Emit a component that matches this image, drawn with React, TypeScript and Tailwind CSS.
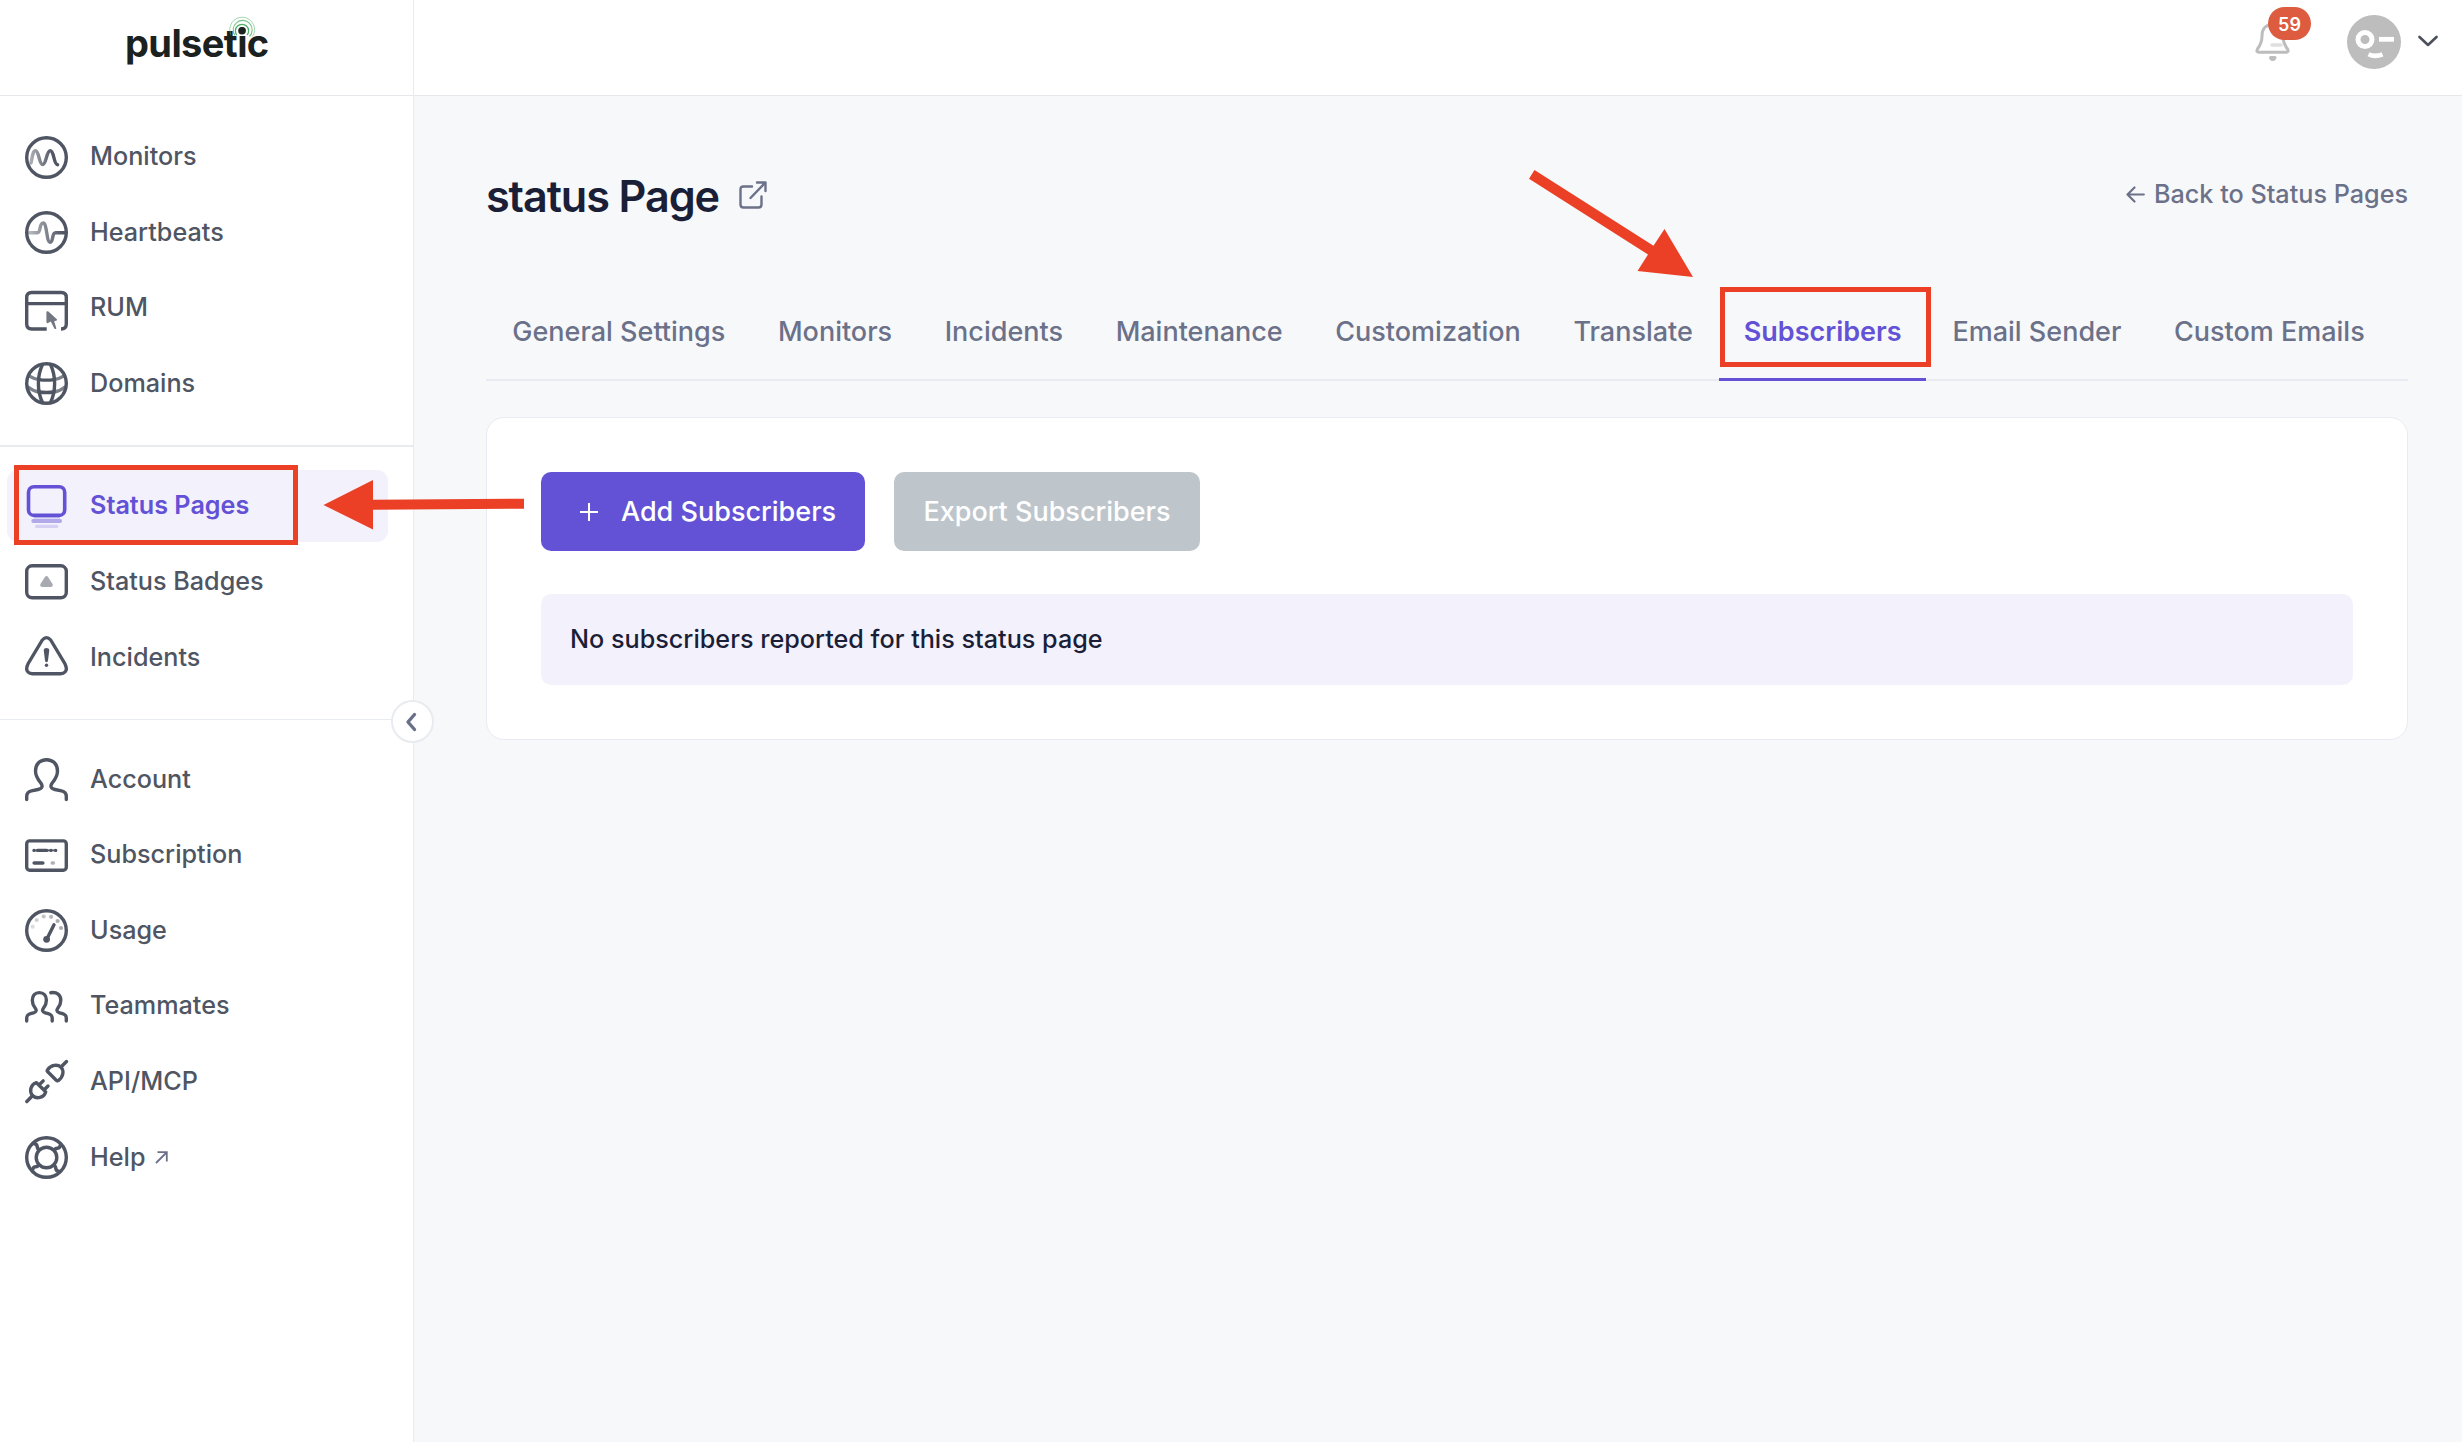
import type { ReactNode } from "react";
import clsx from "clsx";

type IconProps = {
  children: ReactNode;
};

type NavItem = {
  label: string;
  icon: ReactNode;
  active?: boolean;
  external?: boolean;
};

const NavIcon = ({ children }: IconProps) => (
  <svg
    viewBox="0 0 43 43"
    className="relative top-px w-[43px] h-[43px] shrink-0 overflow-visible"
    fill="none"
    stroke="currentColor"
    strokeWidth="3.4"
    strokeLinecap="round"
    strokeLinejoin="round"
  >
    {children}
  </svg>
);

const MonitorsIcon = () => (
  <NavIcon>
    <defs>
      <linearGradient id="wave" x1="4" y1="0" x2="28" y2="0" gradientUnits="userSpaceOnUse">
        <stop offset="0" stopColor="#4f5562" stopOpacity="0.45" />
        <stop offset="1" stopColor="#4f5562" />
      </linearGradient>
    </defs>
    <circle cx="21.5" cy="21.5" r="19.8" />
    <path
      stroke="url(#wave)"
      d="M6 27C7.5 19 8 14.7 10.5 14.7C14 14.7 14 28.5 17.6 28.5C21.4 28.5 21.3 14.7 25.3 14.7C29.2 14.7 28.6 28.5 32.6 28.7"
    />
  </NavIcon>
);

const HeartbeatsIcon = () => (
  <NavIcon>
    <defs>
      <linearGradient id="beat" x1="3" y1="0" x2="38" y2="0" gradientUnits="userSpaceOnUse">
        <stop offset="0" stopColor="#4f5562" stopOpacity="0.4" />
        <stop offset="1" stopColor="#4f5562" />
      </linearGradient>
    </defs>
    <circle cx="21.5" cy="21.5" r="19.8" />
    <path
      stroke="url(#beat)"
      d="M4.5 21.7H12.5C16 21.7 14 12 18.1 12S21.3 31.2 25 31.2S26.5 21.7 30.5 21.7H40"
    />
  </NavIcon>
);

const RumIcon = () => (
  <NavIcon>
    <path strokeLinecap="butt" d="M21.7 42H6.7Q1.7 42 1.7 37V10.5Q1.7 5.5 6.7 5.5H36.3Q41.3 5.5 41.3 10.5V37Q41.3 42 36 42" />
    <path d="M1.7 16.6H41.3" />
    <path
      fill="currentColor"
      stroke="none"
      d="M21.4 25.4V34.8Q21.4 36.6 23 36L25.8 34.6L29.2 41.2Q30.2 42.8 31.4 41.6L29.2 34.2L31.6 33.6Q32.8 33 31.6 32L23.4 24.6Q21.4 23.4 21.4 25.4Z"
      opacity="0.8"
    />
  </NavIcon>
);

const DomainsIcon = () => (
  <NavIcon>
    <circle cx="21.5" cy="21.5" r="19.8" />
    <path d="M17.5 2.5C12 14 12 29 17.5 40.5M25.5 2.5C31 14 31 29 25.5 40.5" />
    <path d="M14 17.6Q21.5 18.7 29 17.6M14 30Q21.5 31 29 30" />
    <path opacity="0.75" d="M5 14.4Q9 17 14 17.6M38 14.4Q34 17 29 17.6M3 25Q8 29.2 14 30M40 25Q35 29.2 29 30" />
  </NavIcon>
);

const StatusPagesIcon = () => (
  <NavIcon>
    <rect x="3.5" y="1.7" width="36.2" height="28.7" rx="5.5" strokeWidth="3.6" />
    <path opacity="0.3" strokeWidth="1.2" d="M9 32.8H34.5" />
    <path opacity="0.45" strokeWidth="3.8" d="M8.2 36H35.2" />
    <path opacity="0.2" strokeWidth="3.2" d="M11.6 41.4H31.7" />
  </NavIcon>
);

const StatusBadgesIcon = () => (
  <NavIcon>
    <rect x="1.7" y="4.8" width="39.6" height="32" rx="5.5" />
    <path
      stroke="none"
      fill="#a7aab1"
      d="M19.6 16.4Q21.5 13.6 23.4 16.4L27.4 22.8Q28.8 25.7 25.8 25.9H17.2Q14.2 25.7 15.6 22.8Z"
    />
  </NavIcon>
);

const IncidentsIcon = () => (
  <NavIcon>
    <path d="M17.3 4Q21.5 -0.8 25.7 4L39.8 27.5Q42.8 33.5 40 36Q38.5 37.7 35.5 37.7H7.5Q4.5 37.7 3 36Q0.2 33.5 3.2 27.5Z" />
    <path stroke="none" fill="currentColor" d="M18.7 14Q18.9 12 21.5 12T24.3 14L23 24.5Q22.8 26.3 21.5 26.3T20 24.5Z" />
    <circle cx="21.5" cy="29.2" r="1.7" fill="currentColor" stroke="none" />
  </NavIcon>
);

const AccountIcon = () => (
  <NavIcon>
    <path d="M1.7 41.5V38.5C1.7 34.5 3.5 33.4 6.5 32.8L13 31.5C17.5 30.5 18 28 15.8 25C12.5 21 10.5 18 10.5 13C10.5 6 15 1.7 21.5 1.7S32.5 6 32.5 13C32.5 18 30.5 21 27.2 25C25 28 25.5 30.5 30 31.5L36.5 32.8C39.5 33.4 41.3 34.5 41.3 38.5V41.5" />
  </NavIcon>
);

const SubscriptionIcon = () => (
  <NavIcon>
    <rect x="1.7" y="6.9" width="39.6" height="29.4" rx="3" />
    <path d="M9 16.4H9.1M12.6 16.4H21.8M25.9 16.4H26M30.6 16.4H30.7" />
    <path strokeWidth="1.6" d="M9 16.4H30.7" />
    <path strokeWidth="3.6" d="M9.2 29H17.8" />
    <path opacity="0.45" d="M27.2 29H28.4" />
  </NavIcon>
);

const UsageIcon = () => (
  <NavIcon>
    <circle cx="21.5" cy="21.5" r="19.8" />
    <path d="M29 15.8L21.9 30" />
    <circle cx="21.6" cy="30.3" r="3.4" fill="currentColor" stroke="none" />
    <g fill="currentColor" stroke="none">
      <circle cx="7.7" cy="17.7" r="2.1" opacity="0.2" />
      <circle cx="11.7" cy="11" r="2.1" opacity="0.28" />
      <circle cx="18.7" cy="7.5" r="2.1" opacity="0.35" />
      <circle cx="26.1" cy="7.8" r="2.1" opacity="0.42" />
      <circle cx="32.6" cy="12" r="2.1" opacity="0.48" />
      <circle cx="36" cy="19" r="2.1" opacity="0.48" />
    </g>
  </NavIcon>
);

const TeammatesIcon = () => (
  <NavIcon>
    <path d="M1.7 36V33.5C1.7 30 3.2 29.4 5.5 28.7L8.5 27.8C11.8 26.8 11.8 25 10 22.7C8.2 20.4 7.3 18.5 7.3 15.2C7.3 10.5 10 7.6 14.3 7.6S21.4 10.5 21.4 15.2C21.4 18.5 20.4 20.4 18.7 22.7C17 25 16.9 26.8 20.2 27.8L23.2 28.7C25.5 29.4 27.2 30 27.2 33.5V36" />
    <path d="M25.8 7.7C32 6.8 35.8 9.7 35.8 15.2C35.8 18.5 34.8 20.4 33.1 22.7C31.4 25 31.3 26.8 34.6 27.8L37.5 28.7C39.8 29.4 41.3 30 41.3 33.5V36" />
  </NavIcon>
);

const ApiIcon = () => (
  <NavIcon>
    <path d="M41.5 1.5L36 7" />
    <path d="M22.6 9.7C26 4.8 32.5 4 36 7.2C39.3 10.7 38.3 17 33.6 20.3Q32.3 21.2 31 20L23 12Q21.7 10.9 22.6 9.7Z" />
    <path d="M1.8 41.5L7.5 35.7" />
    <path d="M11.5 22.7C5.5 24.5 4 31.5 7.5 35.5C11.5 39.5 19 38 20.7 31.8ZM14.5 24.5L18.2 20.9M19.5 29.5L23 26" />
  </NavIcon>
);

const HelpIcon = () => (
  <NavIcon>
    <circle cx="21.5" cy="21.5" r="19.8" />
    <circle cx="21.5" cy="21.5" r="10.3" />
    <path d="M8.5 7.5Q12 7.8 12.2 10.5T14.4 13.6M35.5 8.5Q35.2 12 32.5 12.2T29.4 14.4M34.5 35.5Q31 35.2 30.8 32.5T28.6 29.4M7.5 34.5Q7.8 31 10.5 30.8T13.6 28.6" />
  </NavIcon>
);

const groups: NavItem[][] = [
  [
    { label: "Monitors", icon: <MonitorsIcon /> },
    { label: "Heartbeats", icon: <HeartbeatsIcon /> },
    { label: "RUM", icon: <RumIcon /> },
    { label: "Domains", icon: <DomainsIcon /> },
  ],
  [
    { label: "Status Pages", icon: <StatusPagesIcon />, active: true },
    { label: "Status Badges", icon: <StatusBadgesIcon /> },
    { label: "Incidents", icon: <IncidentsIcon /> },
  ],
  [
    { label: "Account", icon: <AccountIcon /> },
    { label: "Subscription", icon: <SubscriptionIcon /> },
    { label: "Usage", icon: <UsageIcon /> },
    { label: "Teammates", icon: <TeammatesIcon /> },
    { label: "API/MCP", icon: <ApiIcon /> },
    { label: "Help", icon: <HelpIcon />, external: true },
  ],
];

const groupStyles = [
  "pt-[24px] pb-[26px] border-b-2",
  "pt-[22.8px] pb-[26px] border-b",
  "pt-[22.8px]",
];

const tabs = [
  "General Settings",
  "Monitors",
  "Incidents",
  "Maintenance",
  "Customization",
  "Translate",
  "Subscribers",
  "Email Sender",
  "Custom Emails",
];

const Logo = () => (
  <div className="relative h-[95px] border-b border-[#e6e8eb] box-content">
    <span className="absolute left-[125px] top-[18px] text-[38px] leading-[50px] font-bold tracking-[-0.6px] text-[#1b211e]">
      pulsetic
    </span>
    <svg viewBox="0 0 32 32" className="absolute left-[226px] top-[15px] w-8 h-8" fill="none" stroke="#4caf63">
      <path d="M10.8 20A6.6 6.6 0 1 1 21.2 20" strokeWidth="1.3" />
      <path d="M9 20.5A9.5 9.5 0 1 1 23.5 21.5" strokeWidth="1.1" opacity="0.75" />
      <path d="M5 20A12.4 12.4 0 1 1 26.5 21.5" strokeWidth="1" opacity="0.5" />
      <circle cx="16" cy="15.7" r="3.8" fill="#1b211e" stroke="none" />
    </svg>
  </div>
);

const Sidebar = () => (
  <aside className="relative w-[414px] shrink-0 bg-white border-r border-[#e8ebef]">
    <Logo />
    <nav>
      {groups.map((items, index) => (
        <div key={index} className={clsx("flex flex-col gap-[3.6px] border-[#e8ebef]", groupStyles[index])}>
          {items.map((item) => (
            <a
              key={item.label}
              className={clsx(
                "flex items-center h-[72px] ml-[7px] mr-[25px] pl-[18px] rounded-[11px] text-[25.2px]",
                item.active ? "bg-[#f3f1fc] font-semibold text-[#6352d6]" : "font-medium text-[#4f5562]"
              )}
            >
              {item.icon}
              <span className={clsx("ml-[22px]", !item.active && "pt-0.5")}>{item.label}</span>
              {item.external && (
                <svg viewBox="0 0 13 13" className="ml-[10px] mt-0.5 w-[13px] h-[13px]" fill="none" stroke="#6b7189" strokeWidth="1.8">
                  <path d="M1 12L11.5 1.5M2.5 1.2H11.8V10.5" />
                </svg>
              )}
            </a>
          ))}
        </div>
      ))}
    </nav>
    <button className="absolute left-[391px] top-[700px] w-[43px] h-[43px] rounded-full bg-white border-2 border-[#e8ebef] flex items-center justify-center">
      <svg viewBox="0 0 12 20" className="w-3 h-5 -ml-1" fill="none" stroke="#6b7089" strokeWidth="3.4" strokeLinecap="round" strokeLinejoin="round">
        <path d="M9.5 2.5L3 10L9.5 17.5" />
      </svg>
    </button>
  </aside>
);

const Header = () => (
  <header className="flex justify-end h-[96px] bg-white border-b border-[#e6e8eb] pr-[24px]">
    <div className="relative w-[57px] h-[55px] mt-[7px] mr-[35px]">
      <svg viewBox="0 0 36 40" className="absolute left-0 top-[15px] w-9 h-10" fill="none" stroke="#bdbdbd" strokeWidth="3" strokeLinejoin="round">
        <path d="M17.5 2.5C10 2.5 7 8 7 14C7 20 5.5 23 2.5 27Q0.8 30.3 4 30.3H31Q34.2 30.3 32.5 27C29.5 23 28 20 28 14C28 8 25 2.5 17.5 2.5Z" />
        <path stroke="#e0e0e0" strokeWidth="3.6" strokeLinecap="round" d="M17 23H26" />
        <path stroke="none" fill="#bdbdbd" d="M14 35.5Q14 34 15.5 34H20Q21.5 34 21.5 35.5Q20.8 39 17.7 39T14 35.5Z" />
      </svg>
      <span className="absolute left-[13px] top-0 w-[43px] h-[33px] rounded-full bg-[#dd5c3f] text-white text-[18px] font-semibold flex items-center justify-center pt-0.5">
        59
      </span>
    </div>
    <svg viewBox="0 0 54 54" className="w-[54px] h-[54px] mt-[15px] mr-[17px]">
      <circle cx="27" cy="27" r="27" fill="#bdbdbd" />
      <circle cx="18" cy="24.5" r="7" fill="none" stroke="#fff" strokeWidth="5" />
      <path d="M32 24.3H47" stroke="#fff" strokeWidth="4.8" />
      <path d="M21.5 39.3Q28 42.5 35.5 39.3" fill="none" stroke="#fff" strokeWidth="4.6" />
    </svg>
    <svg viewBox="0 0 20 12" className="w-5 h-3 mt-[35px]" fill="none" stroke="#4b505c" strokeWidth="2.6" strokeLinecap="round" strokeLinejoin="round">
      <path d="M1.5 2L10 10L18.5 2" />
    </svg>
  </header>
);

const Tabs = () => (
  <div className="flex h-[97px] border-b-2 border-[#e9ebf2] mt-[30px]">
    {tabs.map((tab) => (
      <a
        key={tab}
        className={clsx(
          "flex items-center h-[97px] text-[27px] whitespace-nowrap",
          tab === "Subscribers"
            ? "px-[24.5px] pt-[3px] font-semibold text-[#6352d6] border-b-3 border-[#6352d6]"
            : "px-[26.3px] font-medium text-[#6b7189]"
        )}
      >
        {tab}
      </a>
    ))}
  </div>
);

const SubscribersCard = () => (
  <section className="mt-9 h-[323px] rounded-[18px] bg-white border border-[#e9ebf2] px-[54px] pt-[54px]">
    <div className="flex gap-[29px]">
      <button className="flex items-center w-[324px] h-[79px] rounded-[10px] bg-[#6352d6] text-white text-[27px] font-medium">
        <svg viewBox="0 0 18 18" className="ml-[39px] mr-[23px] w-[18px] h-[18px]" stroke="#fff" strokeWidth="2">
          <path d="M9 0V18M0 9H18" />
        </svg>
        <span className="pt-0.5">Add Subscribers</span>
      </button>
      <button className="w-[306px] h-[79px] pt-0.5 rounded-[10px] bg-[#bec6cc] text-white text-[27px] font-medium">
        Export Subscribers
      </button>
    </div>
    <div className="mt-[43px] flex items-center h-[91px] rounded-[10px] bg-[#f3f1fc] pl-[29px] text-[25.2px] font-medium text-[#1b1e37]">
      No subscribers reported for this status page
    </div>
  </section>
);

// red boxes and arrows that point out where to click
const Callouts = () => (
  <>
    <div className="absolute left-[14px] top-[465px] w-[284px] h-[80px] border-5 border-[#eb4026]" />
    <div className="absolute left-[1720px] top-[287px] w-[211px] h-[80px] border-5 border-[#eb4026]" />
    <svg viewBox="0 0 201 50" className="absolute left-[323px] top-[480px] w-[201px] h-[50px]" fill="#eb4026">
      <path d="M0.5 25L50 0V19.7L201 18.7V28.7L50 29.7V49.5Z" />
    </svg>
    <svg viewBox="0 0 164 108" className="absolute left-[1529px] top-[170px] w-[164px] h-[108px]" fill="#eb4026">
      <path d="M5.5 0L124.5 75.7L135.5 59L164 107L108.5 101L119 84.5L0 8.7Z" />
    </svg>
  </>
);

export default function App() {
  return (
    <div className="relative flex w-[2462px] h-[1442px] overflow-hidden bg-[#f7f8fa] font-['Inter',sans-serif]">
      <Sidebar />
      <div className="flex-1">
        <Header />
        <main className="pl-[72px] pr-[54px]">
          <div className="flex items-center justify-between h-[158px] pt-[40px]">
            <div className="flex items-center">
              <h1 className="pt-[3px] text-[43.2px] font-semibold tracking-[-1.1px] text-[#1b1e37]">status Page</h1>
              <svg viewBox="0 0 28 28" className="ml-[20px] w-7 h-7" fill="none" stroke="#6b7189" strokeWidth="2.4" strokeLinecap="round" strokeLinejoin="round">
                <path d="M13 5.5H4.5Q1.5 5.5 1.5 8.5V23.5Q1.5 26.5 4.5 26.5H19.5Q22.5 26.5 22.5 23.5V15.5" />
                <path d="M11.5 17L26.5 1.5M18 1.5H26.5V10" />
              </svg>
            </div>
            <a className="flex items-center gap-[9px] text-[25.2px] font-medium text-[#6b7189]">
              <svg viewBox="0 0 19 17" className="w-[19px] h-[17px]" fill="none" stroke="#6b7189" strokeWidth="2.2" strokeLinecap="round" strokeLinejoin="round">
                <path d="M17.8 8.5H1.5M8.5 1.5L1.5 8.5L8.5 15.5" />
              </svg>
              Back to Status Pages
            </a>
          </div>
          <Tabs />
          <SubscribersCard />
        </main>
      </div>
      <Callouts />
    </div>
  );
}
